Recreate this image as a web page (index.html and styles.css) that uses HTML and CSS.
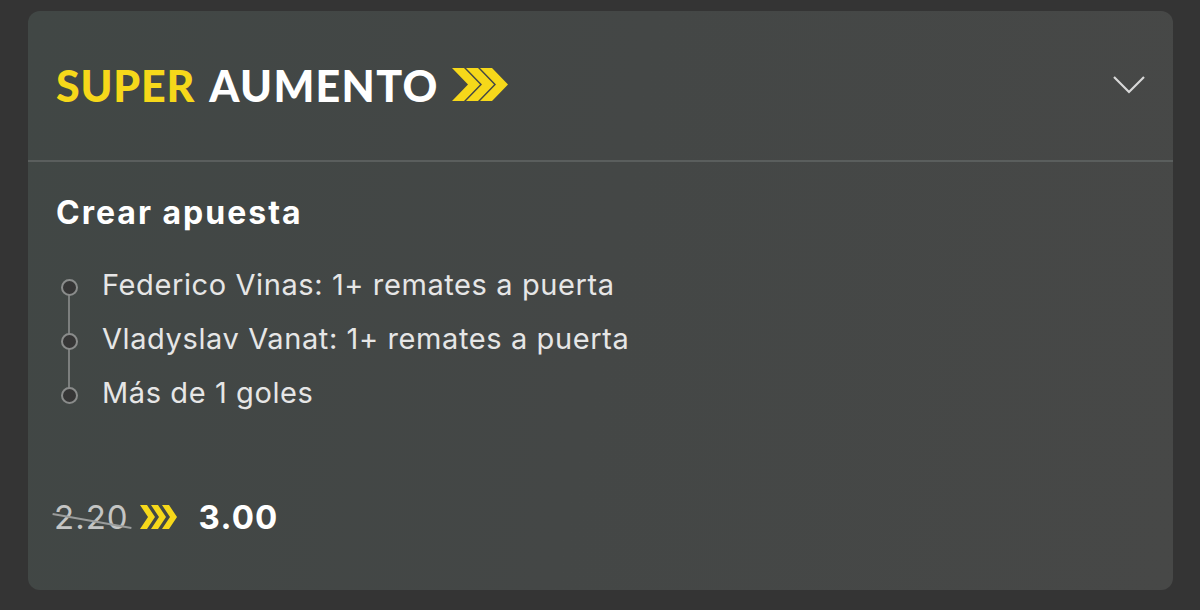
FILE: index.html
```html
<!DOCTYPE html>
<html lang="es">
<head>
<meta charset="utf-8">
<link rel="stylesheet" href="styles.css">
</head>
<body>
<div class="card">
  <header class="head">
    <div class="brand">
      <span class="super">SUPER</span>
      <span class="aumento">AUMENTO</span>
      <svg class="chev-big" width="56" height="33" viewBox="0 0 56 33">
        <path d="M0 0h12l16 16.5L12 33H0l16-16.5z" fill="#f6d81a"/>
        <path d="M14 0h12l16 16.5L26 33H14l16-16.5z" fill="#f6d81a"/>
        <path d="M28 0h12l16 16.5L40 33H28l16-16.5z" fill="#f6d81a"/>
      </svg>
    </div>
    <svg class="toggle" width="34" height="22" viewBox="0 0 34 22">
      <path d="M2 3l15 15L32 3" fill="none" stroke="#d8d8d8" stroke-width="2.2"/>
    </svg>
  </header>
  <section class="body">
    <h2 class="title">Crear apuesta</h2>
    <ul class="legs">
      <li>Federico Vinas: 1+ remates a puerta</li>
      <li>Vladyslav Vanat: 1+ remates a puerta</li>
      <li>Más de 1 goles</li>
    </ul>
    <div class="odds">
      <span class="old">2.20</span>
      <svg class="chev-small" width="37" height="24" viewBox="0 0 37 24">
        <path d="M0 0h7l8 12-8 12H0l8-12z" fill="#f6d81a"/>
        <path d="M11 0h7l8 12-8 12h-7l8-12z" fill="#f6d81a"/>
        <path d="M22 0h7l8 12-8 12h-7l8-12z" fill="#f6d81a"/>
      </svg>
      <span class="new">3.00</span>
    </div>
  </section>
</div>
</body>
</html>
```

FILE: styles.css
```css
html, body {
  margin: 0;
  padding: 0;
}
body {
  background: #343434;
  width: 1200px;
  height: 610px;
  padding: 11px 27px 0 28px;
  box-sizing: border-box;
  font-family: Inter, "Noto Sans", sans-serif;
}
.card {
  height: 579px;
  border-radius: 12px;
  background: linear-gradient(100deg, #414745 0%, #444746 50%, #474847 100%);
  overflow: hidden;
  display: flex;
  flex-direction: column;
}
.head {
  height: 149px;
  border-bottom: 2px solid #5a5e5d;
  display: flex;
  align-items: center;
  justify-content: space-between;
  padding: 0 27px 0 28px;
  flex-shrink: 0;
}
.brand {
  display: flex;
  align-items: center;
  font-family: Lato, sans-serif;
  font-weight: 900;
  font-size: 43px;
  letter-spacing: 0.8px;
}
.super { color: #f6d81a; }
.aumento { color: #ffffff; margin-left: 14px; letter-spacing: 1.3px; }
.chev-big { margin-left: 13px; margin-top: -2px; }
.toggle { margin-top: -2px; }
.body {
  padding: 33px 28px 0 28px;
  display: flex;
  flex-direction: column;
}
.title {
  margin: 0;
  font-size: 32px;
  font-weight: 700;
  color: #ffffff;
  line-height: 36px;
  letter-spacing: 2px;
}
.legs {
  list-style: none;
  margin: 27px 0 0 0;
  padding: 0;
  position: relative;
}
.legs::before {
  content: "";
  position: absolute;
  left: 12px;
  top: 29px;
  height: 107px;
  width: 2px;
  background: #7c7f7e;
}
.legs li {
  position: relative;
  height: 54px;
  line-height: 54px;
  font-size: 29px;
  color: #e6e6e6;
  padding-left: 46px;
  letter-spacing: 0.6px;
}
.legs li::before {
  content: "";
  position: absolute;
  left: 4.5px;
  top: 21px;
  width: 13px;
  height: 13px;
  border-radius: 50%;
  border: 2px solid #8a8c8b;
  background: #363636;
}
.odds {
  display: flex;
  align-items: center;
  margin-top: 77px;
  line-height: 40px;
}
.old {
  position: relative;
  font-size: 33px;
  color: #c4c5c4;
  letter-spacing: 1px;
  margin-left: -2px;
}
.old::after {
  content: "";
  position: absolute;
  left: -2px;
  right: -3px;
  top: 23px;
  height: 2px;
  background: #9a9c9b;
  transform: rotate(10deg);
}
.chev-small { margin-left: 11px; }
.new {
  margin-left: 22px;
  font-size: 33px;
  font-weight: 700;
  color: #ffffff;
  letter-spacing: 1.2px;
}
```
